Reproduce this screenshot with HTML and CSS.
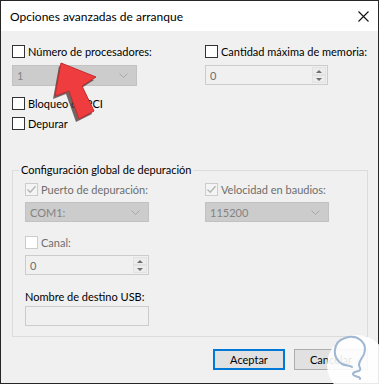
FILE: index.html
```html
<!DOCTYPE html>
<html lang="es">
<head>
  <meta charset="UTF-8">
  <meta name="viewport" content="width=device-width, initial-scale=1.0">
  <title>Opciones avanzadas de arranque</title>
  <link rel="stylesheet" href="styles.css">
</head>
<body>
  <div class="window">
    <div class="titlebar">
      <span class="title">Opciones avanzadas de arranque</span>
      <svg class="close" width="11" height="11" viewBox="0 0 11 11">
        <path d="M0.5 0.5 L10.5 10.5 M10.5 0.5 L0.5 10.5" stroke="#111" stroke-width="1.1" fill="none"/>
      </svg>
    </div>

    <div class="content">
      <div class="cols">
        <div class="col">
          <label class="check"><span class="box"></span>Número de procesadores:</label>
          <div class="combo">
            <span>1</span>
            <svg width="9" height="5" viewBox="0 0 9 5"><path d="M0.5 0.5 L4.5 4.5 L8.5 0.5" stroke="#a8a8a8" fill="none"/></svg>
          </div>
        </div>
        <div class="col">
          <label class="check"><span class="box"></span>Cantidad máxima de memoria:</label>
          <div class="spin wide">
            <span>0</span>
            <div class="spin-btns"><span class="arr up"></span><span class="arr down"></span></div>
          </div>
        </div>
      </div>

      <label class="check pci"><span class="box"></span>Bloqueo de PCI</label>
      <label class="check dep"><span class="box"></span>Depurar</label>

      <fieldset class="group">
        <legend>Configuración global de depuración</legend>
        <div class="cols inner">
          <div class="col">
            <label class="check off">
              <span class="box checked"><svg width="11" height="11" viewBox="0 0 11 11"><path d="M1.5 5.5 L4.2 8.3 L9.5 2.2" stroke="#b3b3b3" stroke-width="1.3" fill="none"/></svg></span>
              Puerto de depuración:
            </label>
            <div class="combo small">
              <span>COM1:</span>
              <svg width="9" height="5" viewBox="0 0 9 5"><path d="M0.5 0.5 L4.5 4.5 L8.5 0.5" stroke="#a8a8a8" fill="none"/></svg>
            </div>
          </div>
          <div class="col">
            <label class="check off">
              <span class="box checked"><svg width="11" height="11" viewBox="0 0 11 11"><path d="M1.5 5.5 L4.2 8.3 L9.5 2.2" stroke="#b3b3b3" stroke-width="1.3" fill="none"/></svg></span>
              Velocidad en baudios:
            </label>
            <div class="combo small">
              <span>115200</span>
              <svg width="9" height="5" viewBox="0 0 9 5"><path d="M0.5 0.5 L4.5 4.5 L8.5 0.5" stroke="#a8a8a8" fill="none"/></svg>
            </div>
          </div>
        </div>

        <label class="check off canal"><span class="box light"></span>Canal:</label>
        <div class="spin narrow">
          <span>0</span>
          <div class="spin-btns"><span class="arr up"></span><span class="arr down"></span></div>
        </div>

        <div class="usb-label">Nombre de destino USB:</div>
        <div class="textbox"></div>
      </fieldset>

      <div class="actions">
        <button class="btn default">Aceptar</button>
        <button class="btn">Cancelar</button>
      </div>
    </div>

    <!-- annotation arrow drawn on top of the screenshot -->
    <svg class="arrow" width="379" height="385" viewBox="0 0 379 385">
      <polygon points="59,66 94,80 80,89 92,114 76,122 66,94 53,99" fill="#4a3535" opacity="0.75"/>
      <polygon points="61,63 96,77 82,86 94,111 79,119 69,91 55,96" fill="#ef3d3f" stroke="#c42a2c" stroke-width="1"/>
    </svg>

    <!-- watermark -->
    <svg class="watermark" width="62" height="62" viewBox="0 0 62 62">
      <circle cx="31" cy="31" r="30" fill="#fff" opacity="0.9"/>
      <path d="M16 30 C6 24 6 8 19 4 C31 0 42 8 38 20 C36 25 33 26 33 31 C33 33 35 34 34 36 C33 38 27 37 27 40 C27 43 35 42 34 45"
            stroke="#9fb7d2" stroke-width="2" fill="none" stroke-linecap="round"/>
      <path d="M16 30 C20 32 24 31 26 33" stroke="#9fb7d2" stroke-width="2" fill="none" stroke-linecap="round"/>
    </svg>
  </div>
</body>
</html>
```

FILE: styles.css
```css
* {
  box-sizing: border-box;
  margin: 0;
  padding: 0;
}
body {
  font-family: 'Segoe UI', Lato, 'Liberation Sans', Arial, sans-serif;
  font-size: 11px;
  color: #000;
  background: #fff;
}
.window {
  position: relative;
  width: 379px;
  height: 384px;
  border: 1px solid #262626;
  background: #f0f0f0;
}
.titlebar {
  height: 30px;
  background: #fff;
  display: flex;
  align-items: center;
  justify-content: space-between;
  padding: 0 9px 0 9px;
}
.title {
  font-size: 12px;
  padding-top: 1px;
}
.close {
  display: block;
}
.content {
  padding: 13px 10px 0 11px;
}
.cols {
  display: grid;
  grid-template-columns: 193px 1fr;
}
.cols.inner {
  grid-template-columns: 180px 1fr;
}
.col {
  display: flex;
  flex-direction: column;
  align-items: flex-start;
}
.check {
  display: flex;
  align-items: center;
  gap: 3px;
  height: 15px;
  line-height: 15px;
  white-space: nowrap;
}
.box {
  width: 13px;
  height: 13px;
  border: 1px solid #333;
  background: #fff;
  flex: none;
}
.box svg {
  display: block;
}
.box.checked {
  border-color: #cccccc;
  background: #f4f4f4;
}
.box.light {
  border-color: #cccccc;
  background: #fff;
}
.check.off {
  color: #6d6d6d;
}
.combo {
  margin-top: 6px;
  width: 125px;
  height: 21px;
  background: #cccccc;
  border: 1px solid #c2c2c2;
  color: #838383;
  display: flex;
  align-items: center;
  justify-content: space-between;
  padding: 0 8px 0 4px;
}
.combo.small {
  margin-top: 5px;
  width: 124px;
  height: 20px;
}
.spin {
  margin-top: 6px;
  height: 20px;
  background: #f0f0f0;
  border: 1px solid #cccccc;
  color: #6d6d6d;
  display: flex;
  align-items: center;
  justify-content: space-between;
  padding-left: 4px;
}
.spin.wide {
  width: 123px;
}
.spin.narrow {
  width: 124px;
  margin-top: 5px;
}
.spin-btns {
  width: 16px;
  height: 18px;
  display: flex;
  flex-direction: column;
  padding: 1px;
}
.arr {
  flex: 1;
  display: flex;
  align-items: center;
  justify-content: center;
  background: #ececec;
  border: 1px solid #e2e2e2;
}
.arr::after {
  content: '';
  border-left: 3px solid transparent;
  border-right: 3px solid transparent;
}
.arr.up::after {
  border-bottom: 3px solid #6f6f6f;
}
.arr.down::after {
  border-top: 3px solid #6f6f6f;
}
.pci {
  margin-top: 10px;
}
.dep {
  margin-top: 5px;
}
.group {
  margin-top: 32px;
  border: 1px solid #dcdcdc;
  padding: 5px 12px 10px 12px;
  min-width: 0;
}
.group legend {
  padding: 0 2px;
  margin-left: -6px;
  line-height: 14px;
}
.canal {
  margin-top: 13px;
}
.usb-label {
  margin-top: 15px;
  line-height: 14px;
}
.textbox {
  margin-top: 2px;
  width: 124px;
  height: 20px;
  background: #f0f0f0;
  border: 1px solid #cccccc;
}
.actions {
  margin-top: 12px;
  display: flex;
  justify-content: flex-end;
  gap: 9px;
}
.btn {
  font: inherit;
  height: 21px;
  background: #e1e1e1;
  border: 1px solid #adadad;
  color: #000;
  width: 74px;
}
.btn.default {
  width: 72px;
  border: 2px solid #0078d7;
}
.arrow {
  position: absolute;
  left: -1px;
  top: -1px;
  pointer-events: none;
}
.watermark {
  position: absolute;
  left: 325px;
  top: 333px;
  pointer-events: none;
}
```
